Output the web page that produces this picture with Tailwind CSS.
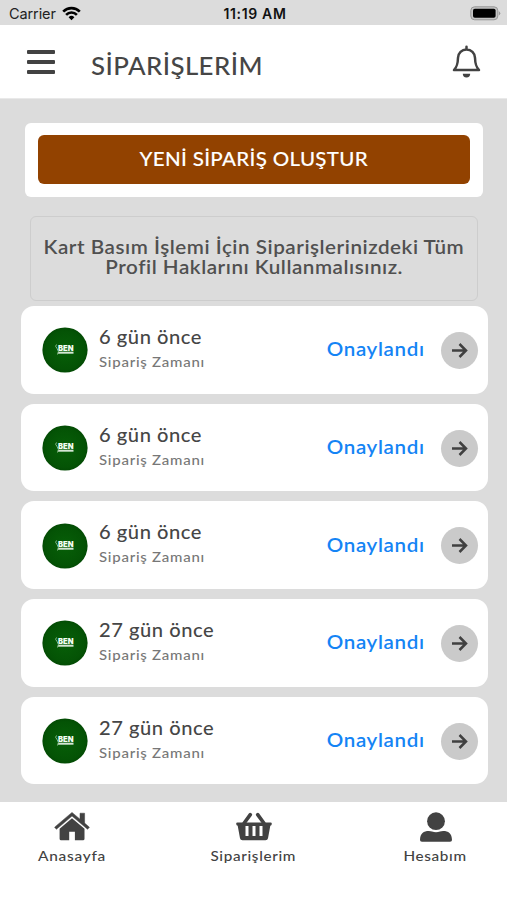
<!DOCTYPE html>
<html lang="tr">
<head>
<meta charset="utf-8">
<title>Siparişlerim</title>
<script src="https://cdn.jsdelivr.net/npm/@tailwindcss/browser@4"></script>
</head>
<body class="w-[507px] h-[900px] overflow-hidden flex flex-col bg-[#dcdcdc] text-[#464646] font-['Lato','Noto_Sans',sans-serif] font-medium">
<div class="h-[25px] shrink-0 grid grid-cols-3 items-center pl-[9px] pr-[6px] pt-[3px] text-black font-['Inter',sans-serif] text-[14.5px] leading-5">
  <div class="flex items-center gap-[6px] font-normal text-[#222]"><span class="tracking-[-0.1px]">Carrier</span>
    <svg class="w-[19px] h-[15px] -mt-[2px]" viewBox="0 0 19 15" fill="none" stroke="#000" stroke-width="2.6"><path d="M1.2 5.6a11.7 11.7 0 0 1 16.6 0M4.1 8.8a7.6 7.6 0 0 1 10.8 0"/><path d="M9.5 14.2 6.6 11.2a4.2 4.2 0 0 1 5.8 0z" fill="#000" stroke="none"/></svg>
  </div>
  <div class="text-center font-semibold text-[14px] tracking-[0.65px] text-[#111] whitespace-nowrap">11:19 AM</div>
  <div class="flex justify-end"><svg class="w-[31px] h-[15px] -mt-[2px]" viewBox="0 0 31 15"><rect x=".8" y=".8" width="27" height="13" rx="3.8" fill="#c4c4c4" stroke="#969696"/><rect x="3" y="2.8" width="22.6" height="9" rx="1.8"/><path d="M28.8 5q3 2.3 0 4.6z" fill="#999"/></svg></div>
</div>
<header class="h-[74px] shrink-0 bg-white border-b border-[#e9e9e9] flex items-center pl-[26.5px] pr-[26px]">
  <div class="w-[28.5px] flex flex-col gap-[5.5px] mt-[1px]"><i class="h-[4.5px] rounded-[1px] bg-[#424242]"></i><i class="h-[4.5px] rounded-[1px] bg-[#424242]"></i><i class="h-[4.5px] rounded-[1px] bg-[#424242]"></i></div>
  <h1 class="ml-[36px] mt-[9px] text-[24px] leading-7 font-medium tracking-[0.4px] whitespace-nowrap origin-left scale-x-[1.075]">SİPARİŞLERİM</h1>
  <svg class="ml-auto w-[29px] h-[33px]" viewBox="0 0 29 33" fill="none" stroke="#424242" stroke-width="2.5" stroke-linejoin="round" stroke-linecap="round"><path d="M14.5 1.800v2M14.500 4.500C9.700 4.500 6.200 8 6 12.700c-.2 7.100-1.300 9.300-4 12.400h25c-2.700-3.100-3.800-5.300-4-12.400C22.800 8 19.300 4.500 14.500 4.500z"/><path d="M10.800 28.800h7.400a3.700 3.700 0 0 1-7.400 0z" fill="#424242" stroke="none"/></svg>
</header>
<main class="h-[703px] shrink-0 flex flex-col pt-[24px]">
  <div class="ml-[25px] w-[457.5px] h-[73.5px] shrink-0 rounded-[6px] bg-white px-[12.5px] py-[12px]">
    <button class="w-full h-[49px] rounded-[6px] bg-[#924200] text-white text-[19px] leading-6 pb-[2px] whitespace-nowrap font-medium"><span class="inline-block tracking-[0.3px] scale-x-[1.08] [-webkit-text-stroke:0.1px_#fff]">YENİ SİPARİŞ OLUŞTUR</span></button>
  </div>
  <div class="ml-[30px] mt-[19.5px] w-[447.5px] h-[85px] shrink-0 rounded-[6px] border border-[#cdcdcd] pt-[20px] text-center text-[19px] leading-[20px] font-semibold whitespace-nowrap text-[#505050] flex flex-col items-center"><span class="tracking-[0.5px] scale-x-[1.085]">Kart Basım İşlemi İçin Siparişlerinizdeki Tüm</span><span class="tracking-[0.5px] scale-x-[1.085]">Profil Haklarını Kullanmalısınız.</span></div>
  <div id="orders" class="mt-[5px] ml-[20.5px] w-[467px] flex flex-col gap-[10px]"></div>
</main>
<nav class="h-[98px] shrink-0 bg-white text-[14px] leading-[18px] grid grid-cols-[143px_221px_143px] text-[#424242] font-medium">
  <a class="flex flex-col items-center pt-[9px]"><svg class="w-[36px] h-[31px]" viewBox="0 0 36 31" fill="#424242"><path d="M18 1.400 26 8.200V2.200h4.600v9.900l4.800 4.100-1.800 2.100L18 5.100 2.400 18.300.6 16.200z" stroke="#424242" stroke-width=".5" stroke-linejoin="round"/><path d="M18 7.200 5.600 17.700v10.100q0 1.500 1.500 1.500h8.100v-8.600h5.700v8.600h8.100q1.500 0 1.500-1.500V17.700z"/></svg><span class="mt-[5px] tracking-[0.7px] scale-x-[1.1]">Anasayfa</span></a>
  <a class="flex flex-col items-center pt-[9px]"><svg class="w-[36px] h-[31px]" viewBox="0 0 36 31"><path d="M8.200 12 14.300 3.600M27.800 12 21.700 3.600" stroke="#424242" stroke-width="3.600" stroke-linecap="round"/><path fill="#424242" fill-rule="evenodd" d="M1.400 11.500h33.200q1.400 0 1.200 1.500t-1.500 1.800l-2.300 12.400q-.4 2.100-2.500 2.100h-23q-2.100 0-2.500-2.100L1.700 14.800Q.4 14.500.2 13t1.200-1.500zM9.500 15h3v10h-3zM16.500 15h3v10h-3zM23.500 15h3v10h-3z"/></svg><span class="mt-[5px] tracking-[0.6px] scale-x-[1.09]">Siparişlerim</span></a>
  <a class="flex flex-col items-center pt-[9px]"><svg class="w-[34px] h-[31px]" viewBox="0 0 34 31" fill="#424242"><circle cx="17" cy="10.200" r="8.900"/><path d="M1 29q0 1.800 2 1.800h28q2 0 2-1.800C33 22 29.200 19.900 24.200 19.900q-2 0-3.200.7-4 1.500-8 0-1.200-.7-3.200-.7C4.800 19.900 1 22 1 29z"/></svg><span class="mt-[5px] tracking-[0.6px] scale-x-[1.09]">Hesabım</span></a>
</nav>
<template id="order">
  <article class="h-[87.7px] shrink-0 rounded-[13px] bg-white flex items-center pl-[21px] pr-[9.500px] pt-[1px]">
    <svg class="w-[46px] h-[46px] shrink-0" viewBox="0 0 46 46"><defs><radialGradient id="g"><stop offset="0" stop-color="#075f08"/><stop offset=".85" stop-color="#045305"/><stop offset="1" stop-color="#034b04"/></radialGradient></defs><circle cx="23" cy="23" r="22.600" fill="url(#g)"/><text x="16" y="23.500" font-family="Inter" font-weight="900" font-size="8.200" fill="#f4fff4" textLength="15.500" lengthAdjust="spacingAndGlyphs">BEN</text><path d="M16 25.700h15.500" stroke="#d5e6d5" stroke-width="2"/><path d="M14.500 17.500q-2 1.500.5 4t.5 6" stroke="#8ab98a" fill="none"/></svg>
    <div class="ml-[11.500px] mt-[-4px] whitespace-nowrap">
      <div class="when text-[19px] leading-[24px] tracking-[0.5px] origin-left scale-x-[1.06]"></div>
      <div class="text-[14px] leading-[20px] mt-[3px] text-[#777]"><span class="inline-block tracking-[0.7px] origin-left scale-x-[1.07]">Sipariş Zamanı</span></div>
    </div>
    <div class="ml-auto mr-[16px] mt-[-2px] text-[19px] leading-6 font-semibold text-[#1484f5] whitespace-nowrap tracking-[0.6px] origin-right scale-x-[1.08]">Onaylandı</div>
    <div class="w-[37px] h-[37px] shrink-0 rounded-full bg-[#cacaca] flex items-center justify-center"><svg class="w-[17px] h-[17px]" viewBox="0 0 17 17" fill="none" stroke="#404040" stroke-width="2.500"><path d="M1 8.500h13.500M8.500 2l6.500 6.500L8.500 15"/></svg></div>
  </article>
</template>
<script>
const list = document.getElementById('orders');
for (const when of ['6 gün önce', '6 gün önce', '6 gün önce', '27 gün önce', '27 gün önce']) {
  const row = document.getElementById('order').content.cloneNode(true);
  row.querySelector('.when').textContent = when;
  list.append(row);
}
</script>
</body>
</html>
